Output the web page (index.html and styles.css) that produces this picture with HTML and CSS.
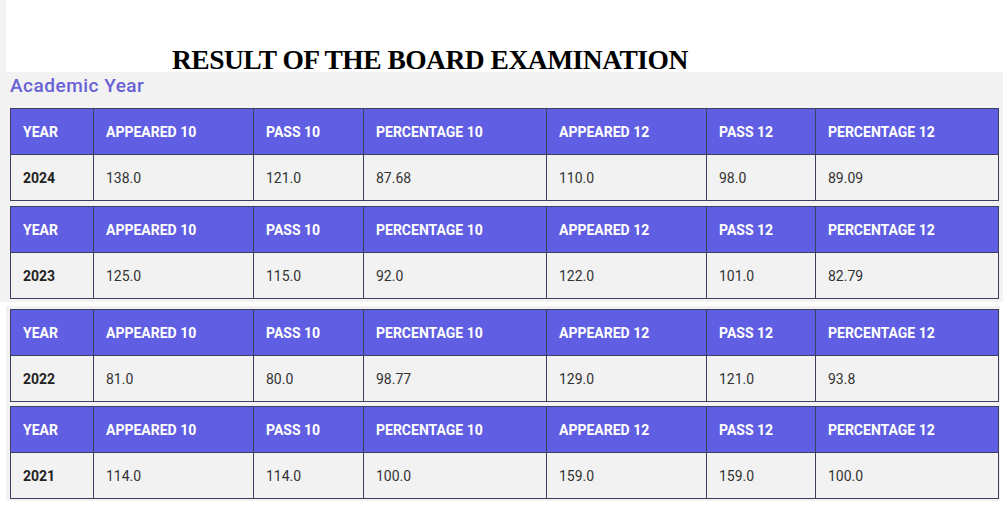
FILE: index.html
```html
<!DOCTYPE html>
<html>
<head>
<meta charset="utf-8">
<link rel="stylesheet" href="styles.css">
</head>
<body>
<div class="panel panel-top">
  <div class="header"><h1 class="title">RESULT OF THE BOARD EXAMINATION</h1></div>
  <h2 class="subtitle">Academic Year</h2>
  <table class="result">
    <colgroup><col class="c1"><col class="c2"><col class="c3"><col class="c4"><col class="c5"><col class="c6"><col class="c7"></colgroup>
    <tr class="head"><th>YEAR</th><th>APPEARED 10</th><th>PASS 10</th><th>PERCENTAGE 10</th><th>APPEARED 12</th><th>PASS 12</th><th>PERCENTAGE 12</th></tr>
    <tr><td class="yr">2024</td><td>138.0</td><td>121.0</td><td>87.68</td><td>110.0</td><td>98.0</td><td>89.09</td></tr>
  </table>
  <table class="result">
    <colgroup><col class="c1"><col class="c2"><col class="c3"><col class="c4"><col class="c5"><col class="c6"><col class="c7"></colgroup>
    <tr class="head"><th>YEAR</th><th>APPEARED 10</th><th>PASS 10</th><th>PERCENTAGE 10</th><th>APPEARED 12</th><th>PASS 12</th><th>PERCENTAGE 12</th></tr>
    <tr><td class="yr">2023</td><td>125.0</td><td>115.0</td><td>92.0</td><td>122.0</td><td>101.0</td><td>82.79</td></tr>
  </table>
</div>
<div class="panel panel-bottom">
  <table class="result">
    <colgroup><col class="c1"><col class="c2"><col class="c3"><col class="c4"><col class="c5"><col class="c6"><col class="c7"></colgroup>
    <tr class="head"><th>YEAR</th><th>APPEARED 10</th><th>PASS 10</th><th>PERCENTAGE 10</th><th>APPEARED 12</th><th>PASS 12</th><th>PERCENTAGE 12</th></tr>
    <tr><td class="yr">2022</td><td>81.0</td><td>80.0</td><td>98.77</td><td>129.0</td><td>121.0</td><td>93.8</td></tr>
  </table>
  <table class="result">
    <colgroup><col class="c1"><col class="c2"><col class="c3"><col class="c4"><col class="c5"><col class="c6"><col class="c7"></colgroup>
    <tr class="head"><th>YEAR</th><th>APPEARED 10</th><th>PASS 10</th><th>PERCENTAGE 10</th><th>APPEARED 12</th><th>PASS 12</th><th>PERCENTAGE 12</th></tr>
    <tr><td class="yr">2021</td><td>114.0</td><td>114.0</td><td>100.0</td><td>159.0</td><td>159.0</td><td>100.0</td></tr>
  </table>
</div>
</body>
</html>
```
FILE: styles.css
```css
html, body {
  margin: 0;
  padding: 0;
  background: #ffffff;
}
body {
  font-family: Roboto, "Liberation Sans", Arial, sans-serif;
}
.panel {
  background: #f2f2f2;
}
.panel-top {
  padding: 0 0 3px 10px;
  width: 993px;
}
.header {
  background: #ffffff;
  margin-left: -4px;
  height: 72px;
}
.title {
  margin: 0;
  padding: 48px 0 0 166px;
  font-family: "Liberation Serif", "Times New Roman", serif;
  font-weight: bold;
  font-size: 27.5px;
  letter-spacing: -0.5px;
  line-height: 24px;
  color: #000000;
  white-space: nowrap;
}
.subtitle {
  margin: 0;
  padding: 2px 0 0 0;
  height: 34px;
  font-family: Roboto, sans-serif;
  font-weight: 500;
  font-size: 19px;
  line-height: 24px;
  color: #6962d6;
  letter-spacing: 0.5px;
}
.panel-bottom {
  margin: 4px 0 0 6px;
  padding: 3px 0 2px 4px;
  width: 990px;
}
.result {
  border-collapse: collapse;
  table-layout: fixed;
  width: 988px;
  background: #f2f2f2;
}
.panel-top .result + .result {
  margin-top: 5px;
}
.panel-bottom .result + .result {
  margin-top: 4px;
}
.c1 { width: 83px; }
.c2 { width: 160px; }
.c3 { width: 110px; }
.c4 { width: 183px; }
.c5 { width: 160px; }
.c6 { width: 109px; }
.c7 { width: 183px; }
.result th, .result td {
  border: 1px solid #3c3f5e;
  height: 46px;
  padding: 0 12px;
  text-align: left;
  font-size: 14px;
  vertical-align: middle;
  box-sizing: border-box;
}
.result th {
  background: #605ee2;
  color: #ffffff;
  font-weight: bold;
}
.result td {
  color: #333333;
  font-weight: 400;
}
.result td.yr {
  font-weight: bold;
  color: #222222;
}
```
